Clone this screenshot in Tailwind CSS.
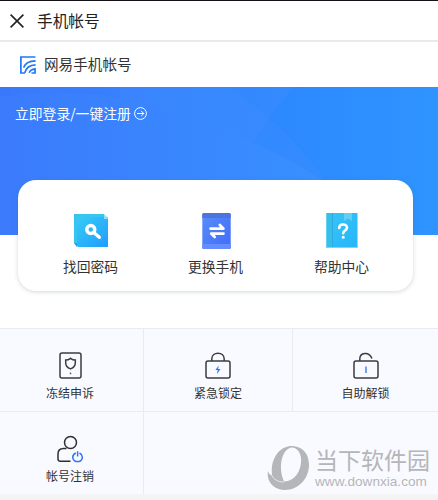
<!DOCTYPE html>
<html lang="zh-CN">
<head>
    <meta charset="UTF-8">
    <meta name="viewport" content="width=device-width, initial-scale=1.0">
    <title>手机帐号</title>
    <script src="https://cdn.jsdelivr.net/npm/@tailwindcss/browser@4"></script>
</head>
<body class="relative w-[438px] h-[500px] overflow-hidden bg-white text-[#333333] font-['Noto_Sans_CJK_SC',sans-serif]">
    <!-- Title bar -->
    <header class="flex items-center h-[42px] pl-[10px] border-t border-t-[#151118] border-b-2 border-b-[#e9e9e9]">
        <svg class="w-[14px] h-[14px]" viewBox="0 0 14 14" fill="none" stroke="#222222" stroke-width="1.6">
            <path d="M0.6 0.6L13.4 13.4M13.4 0.6L0.6 13.4"/>
        </svg>
        <h1 class="ml-[13px] text-[15.7px] leading-5 text-[#222222]">手机帐号</h1>
    </header>
    <div class="flex items-center h-[45px] pl-5">
        <svg class="w-4 h-[18px]" viewBox="0 0 16 18" fill="none" stroke="#2277fa" stroke-width="1.7">
            <path d="M15.4 1H0.9V17H5"/>
            <path d="M3.6 11.6C5 7.6 9 5 15.6 4.9"/>
            <path d="M4.8 16.8C6 12 9.6 9.2 15.6 8.9"/>
            <path d="M9.2 16.8C10 14.6 11.6 13.2 15 12.8V17H11.5"/>
        </svg>
        <h2 class="ml-2 -mt-[2px] text-[14.6px] leading-5">网易手机帐号</h2>
    </div>

    <!-- Banner -->
    <section class="relative h-[148px] pl-[15px] pt-4 bg-linear-to-r from-[#3a78fb] to-[#2f94ff]">
        <svg class="absolute inset-0 w-full h-full" viewBox="0 0 438 148" preserveAspectRatio="none">
            <defs>
                <linearGradient id="wave" x1="0" y1="0" x2="1" y2="0">
                    <stop offset="0" stop-color="#3b7bfc"/>
                    <stop offset="1" stop-color="#3890ff"/>
                </linearGradient>
                <linearGradient id="right" x1="0" y1="0" x2="1" y2="0">
                    <stop offset="0" stop-color="#2b84fd"/>
                    <stop offset="1" stop-color="#2f94ff"/>
                </linearGradient>
            </defs>
            <path d="M294 0H438V148H210C228 102 254 44 294 0Z" fill="url(#right)"/>
            <path d="M228 0C262 22 299 55 327 96H120V0Z" fill="#3f8cff" fill-opacity="0.4"/>
            <path d="M0 10C75 -2 155 11 230 45C270 63 300 78 327 96V148H0Z" fill="url(#wave)"/>
        </svg>
        <a href="#" class="relative flex items-center text-[13.8px] leading-5 text-white">
            立即登录/一键注册
            <svg class="ml-[3px] w-[13px] h-[13px]" viewBox="0 0 13 13" fill="none" stroke="white" stroke-width="1">
                <circle cx="6.5" cy="6.5" r="5.9"/>
                <path d="M3 6.5H9.8M7.2 3.9L9.8 6.5L7.2 9.1"/>
            </svg>
        </a>
    </section>

    <!-- Main actions -->
    <nav class="relative flex w-[395px] h-[111px] ml-[18px] -mt-[55px] mb-[37px] px-[10px] pt-8 rounded-[18px] bg-white shadow-[0_1px_4px_rgba(70,100,125,0.25)]">
        <a href="#" class="flex flex-col items-center flex-1">
            <svg class="w-9 h-[37px]" viewBox="0 0 36 37">
                <defs>
                    <linearGradient id="key" x1="0" y1="0" x2="1" y2="1">
                        <stop offset="0" stop-color="#35ccf5"/>
                        <stop offset="1" stop-color="#219cff"/>
                    </linearGradient>
                </defs>
                <path d="M1 2H31V5H4V34L1 31Z" fill="#38c4ee"/>
                <path d="M4 5H35V35H5L4 34Z" fill="url(#key)"/>
                <path d="M31 2L35 6V7H31Z" fill="#87e4f8"/>
                <path d="M1 31H4V35Z" fill="#239df0"/>
                <circle cx="17.8" cy="17.5" r="4" fill="none" stroke="white" stroke-width="3.4"/>
                <path d="M20.8 20.5L26.3 25.3" stroke="white" stroke-width="3.4" stroke-linecap="round"/>
            </svg>
            <span class="mt-[7px] text-[13.8px] leading-5">找回密码</span>
        </a>
        <a href="#" class="flex flex-col items-center flex-1">
            <svg class="ml-px w-[29px] h-[37px]" viewBox="0 0 29 37">
                <defs>
                    <linearGradient id="phone" x1="0" y1="0" x2="1" y2="1">
                        <stop offset="0" stop-color="#588df9"/>
                        <stop offset="1" stop-color="#416cfa"/>
                    </linearGradient>
                </defs>
                <rect x="0.3" y="1" width="28.4" height="36" rx="1.5" fill="url(#phone)"/>
                <path d="M0.3 6V2.5Q0.3 1 1.8 1H27.2Q28.7 1 28.7 2.5V6Z" fill="#4c73de"/>
                <path d="M0.3 32H28.7V35.5Q28.7 37 27.2 37H1.8Q0.3 37 0.3 35.5Z" fill="#658dff"/>
                <path d="M8.5 16.6H21.5L17.8 13M21.5 21.6H9.2L12.7 25" fill="none" stroke="white" stroke-width="2.7" stroke-linecap="round" stroke-linejoin="round"/>
            </svg>
            <span class="mt-[7px] text-[13.8px] leading-5">更换手机</span>
        </a>
        <a href="#" class="flex flex-col items-center flex-1">
            <svg class="ml-[2px] w-8 h-[37px]" viewBox="0 0 32 37">
                <defs>
                    <linearGradient id="book" x1="0" y1="0" x2="1" y2="1">
                        <stop offset="0" stop-color="#38c6f5"/>
                        <stop offset="1" stop-color="#25b5fa"/>
                    </linearGradient>
                </defs>
                <rect x="0.5" y="1" width="31" height="35" rx="0.5" fill="url(#book)"/>
                <path d="M0.5 1H6.5V36H0.5Z" fill="#35bfe9"/>
                <path d="M6 1H6.8V36H6Z" fill="#2aa5dc"/>
                <path d="M0.5 35H31.5V36H0.5Z" fill="#6bdcfa"/>
                <path d="M18 1H26V9L22 6.5L18 9Z" fill="#62cff1"/>
                <path d="M13.2 16C13.2 11.3 21 11.5 21 15.7C21 18.5 17.2 18.5 17.2 21.2" fill="none" stroke="white" stroke-width="2.6" stroke-linecap="round"/>
                <circle cx="17.2" cy="25.2" r="1.5" fill="white"/>
            </svg>
            <span class="ml-[2px] mt-[7px] text-[13.8px] leading-5">帮助中心</span>
        </a>
    </nav>

    <!-- Secondary actions -->
    <div class="grid grid-cols-[144px_149px_145px] grid-rows-[83px_83px] bg-[#f9faff] text-[12px] leading-4">
        <a href="#" class="flex flex-col items-center pt-[23px] pr-[3px] border-t border-r border-[#e9ebf1]">
            <svg class="w-[23px] h-[27px]" viewBox="0 0 23 27" fill="none" stroke="#3b3b43" stroke-width="1.5">
                <rect x="1" y="1" width="21" height="25" rx="2"/>
                <path d="M11.5 6.3C9.8 7.6 8.3 8 6.7 8V11C6.7 13.8 8.5 15.7 11.5 16.9C14.5 15.7 16.3 13.8 16.3 11V8C14.7 8 13.2 7.6 11.5 6.3Z"/>
                <circle cx="11.5" cy="21.4" r="0.9" fill="#5c6284" stroke="none"/>
            </svg>
            <span class="mt-[6px]">冻结申诉</span>
        </a>
        <a href="#" class="flex flex-col items-center pt-[23px] border-t border-r border-[#e9ebf1]">
            <svg class="w-[26px] h-[27px]" viewBox="0 0 26 27" fill="none" stroke="#3b3b43" stroke-width="1.5">
                <rect x="1" y="9" width="24" height="17" rx="2"/>
                <path d="M6.8 9V7C6.8 -0.8 19.2 -0.8 19.2 7V9"/>
                <path d="M13.8 13.4L10.4 18H12.7L11.9 22.2L15.5 17H13.1Z" fill="#3474f3" stroke="none"/>
            </svg>
            <span class="mt-[6px]">紧急锁定</span>
        </a>
        <a href="#" class="flex flex-col items-center pt-[23px] border-t border-[#e9ebf1]">
            <svg class="w-[26px] h-[27px]" viewBox="0 0 26 27" fill="none" stroke="#3b3b43" stroke-width="1.5">
                <rect x="1" y="9" width="24" height="17" rx="2"/>
                <path d="M6.8 9V7C6.8 0.5 16 -1 18.9 6.5"/>
                <path d="M13 14.5V21" stroke="#4a80e9"/>
            </svg>
            <span class="mt-[6px]">自助解锁</span>
        </a>
        <a href="#" class="flex flex-col items-center pt-[23px] pr-[3px] border-t border-r border-[#e9ebf1]">
            <svg class="w-7 h-7" viewBox="0 0 28 28" fill="none" stroke="#2e2e35" stroke-width="1.5">
                <circle cx="14.5" cy="7.5" r="6"/>
                <path d="M10.5 13.5H7.5C4 13.5 2 15.5 2 19V24C2 25.5 3 26.3 4.5 26.3H14.5"/>
                <path d="M19.7 18C14.5 21 17 26.6 21.6 26.6C26.2 26.6 28.6 21 23.5 18M21.6 16.3V21.5" stroke="#3474f3"/>
            </svg>
            <span class="mt-[5px]">帐号注销</span>
        </a>
        <div class="col-span-2 border-t border-[#e9ebf1]"></div>
    </div>
    <footer class="h-[6px] bg-[#f4f4f4]"></footer>

    <!-- Watermark -->
    <div class="absolute left-[267px] top-[445px] flex text-[#b5b6b9]">
        <svg class="w-[43px] h-[46px]" viewBox="0 0 43 46" fill="currentColor">
            <path fill-rule="evenodd" d="M5 30C3 11 15 0 26 1C37 2 42 10 42 20C42 34 31 45 18 45C7 45 -1 37 1 26C2 29 3 30 5 30ZM17 36.5C29 36 35 24 34 13C33 5 28 2 24 2.5C14 5 11 24 17 36.5Z"/>
            <path d="M4 29C7 35 11 37 17 37" fill="none" stroke="#f9faff" stroke-width="0.7"/>
        </svg>
        <div class="ml-[5px] -mt-px">
            <div class="h-[30px] text-[23px] leading-[30px] whitespace-nowrap">当下软件园</div>
            <div class="h-[14px] mt-px text-[13.6px] leading-[14px] whitespace-nowrap font-['Liberation_Sans',sans-serif]">www.downxia.com</div>
        </div>
    </div>
</body>
</html>
